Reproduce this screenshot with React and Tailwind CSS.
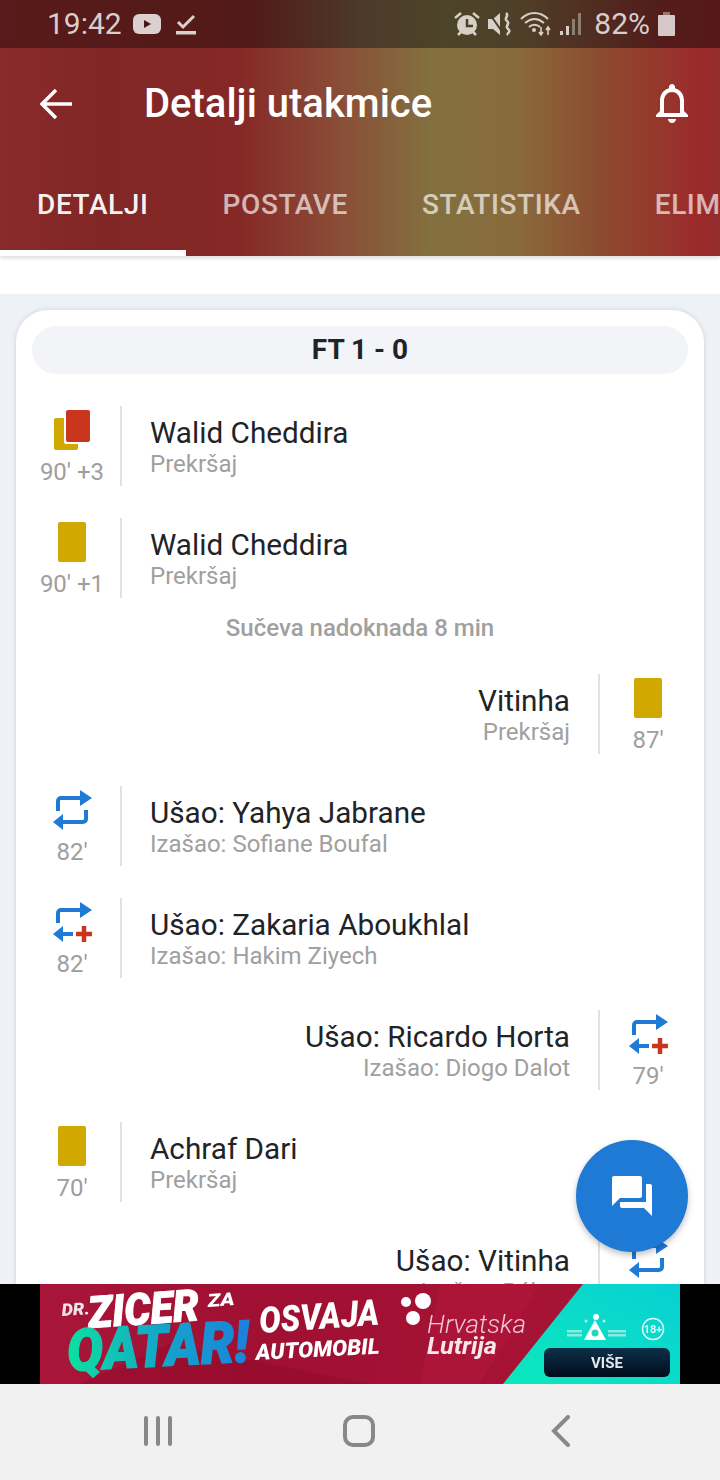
import React from "react";

const font = { fontFamily: "Roboto, 'Noto Sans', sans-serif" };

function CardIcon({ type }) {
  if (type === "yr") {
    return (
      <svg width="40" height="44" viewBox="0 0 40 44" className="block">
        <rect x="2" y="12" width="24" height="32" rx="2" fill="#d0a800" />
        <rect x="12" y="2" width="28" height="36" rx="2" fill="#ffffff" />
        <rect x="14" y="4" width="24" height="32" rx="2" fill="#c9351d" />
      </svg>
    );
  }
  return <div className="w-7 h-10 rounded-[2px] bg-[#d0a800]" />;
}

function SwapIcon({ plus }) {
  return (
    <svg width="44" height="44" viewBox="-2 -2 44 44" className="block">
      <path d="M6 23V13a3 3 0 0 1 3-3h20" fill="none" stroke="#1f7ad6" strokeWidth="4" />
      <path d="M28 2l12 8-12 8z" fill="#1f7ad6" />
      {plus ? (
        <>
          <path d="M11 34h10" stroke="#1f7ad6" strokeWidth="4" />
          <path d="M1 34l10-8v16z" fill="#1f7ad6" />
          <path d="M24 34h16M32 26v16" stroke="#c9351d" strokeWidth="4.5" />
        </>
      ) : (
        <>
          <path d="M34 22v9a3 3 0 0 1-3 3H11" fill="none" stroke="#1f7ad6" strokeWidth="4" />
          <path d="M1 34l10-8v16z" fill="#1f7ad6" />
        </>
      )}
    </svg>
  );
}

// one line of the match timeline; side is the team (left = home, right = away)
function EventRow({ side = "left", icon, time, title, sub }) {
  const right = side === "right";
  return (
    <div className={`flex h-20 px-2 ${right ? "flex-row-reverse text-right" : ""}`}>
      <div className="w-24 flex flex-col items-center">
        <div className="h-[52px] flex items-start justify-center">{icon}</div>
        <div className="text-[24px] leading-7 text-[#9e9e9e]">{time}</div>
      </div>
      <div className="w-0.5 h-20 bg-[#e2e2e2]" />
      <div className={`flex flex-col ${right ? "pr-7" : "pl-7"}`}>
        <div className="text-[29.7px] leading-8 mt-[11px] text-[#212327]">{title}</div>
        <div className="text-[24px] leading-7 mt-[1px] text-[#a0a0a0]">{sub}</div>
      </div>
    </div>
  );
}

function StatusBar() {
  return (
    <div className="h-12 flex items-center justify-between pl-[47px] pr-[45px] text-[#d9cdcd] bg-[linear-gradient(90deg,#581a1a_0%,#521a18_35%,#4c3a2a_50%,#4c4528_62%,#4f3f28_72%,#521c1a_92%,#571818_100%)]">
      <div className="flex items-center">
        <span className="text-[30px] leading-none">19:42</span>
        <svg width="28" height="20" viewBox="0 0 28 20" className="ml-[11px]">
          <rect width="28" height="20" rx="6" fill="#dccfcf" />
          <path d="M11 6l7 4-7 4z" fill="#4c1414" />
        </svg>
        <svg width="20" height="24" viewBox="0 0 20 24" className="ml-[15px]">
          <path d="M2 10l5 5 11-11" fill="none" stroke="#dccfcf" strokeWidth="3" />
          <rect x="0" y="19" width="20" height="3.5" fill="#dccfcf" />
        </svg>
      </div>
      <div className="flex items-center">
        <svg width="28" height="26" viewBox="0 0 28 26">
          <circle cx="14" cy="14" r="10" fill="#d6d0c6" />
          <path d="M14 8v7h6" fill="none" stroke="#4a4028" strokeWidth="2.5" />
          <path d="M2 7l6-5M26 7l-6-5M5 24l3-3M23 24l-3-3" stroke="#d6d0c6" strokeWidth="2.5" />
        </svg>
        <svg width="24" height="24" viewBox="0 0 24 24" className="ml-[7px]">
          <path d="M0 7h5l7-6v22l-7-6H0z" fill="#d6d0c6" />
          <path d="M1 1l14 20" stroke="#4a4028" strokeWidth="2" />
          <path d="M18 1c4 3-3 5 1 8s-3 5 1 8-2 4 0 6" fill="none" stroke="#d6d0c6" strokeWidth="2.5" />
        </svg>
        <svg width="32" height="24" viewBox="0 0 32 24" className="ml-[8px]">
          <path d="M1 7c8-8 19-8 27 0M5 11c6-5 13-5 19 0M9 15c3-3 8-3 11 0" fill="none" stroke="#d6d0c6" strokeWidth="2" />
          <circle cx="14" cy="18" r="2" fill="#d6d0c6" />
          <path d="M21 15v7M19 20l2 3 2-3M28 23v-8M26 18l2-3 2 3" fill="none" stroke="#d6d0c6" strokeWidth="1.6" />
        </svg>
        <svg width="22" height="24" viewBox="0 0 22 24" className="ml-[8px]">
          <rect x="0" y="19" width="3" height="4" fill="#d6d0c6" />
          <rect x="6" y="14" width="3" height="9" fill="#d6d0c6" />
          <rect x="12" y="7" width="3" height="16" fill="#8b8070" />
          <rect x="18" y="1" width="3" height="22" fill="#8b8070" />
        </svg>
        <span className="text-[30px] leading-none ml-3">82%</span>
        <svg width="17" height="24" viewBox="0 0 17 24" className="ml-2">
          <path d="M5 0h7v3H5z" fill="#8d7a78" />
          <rect y="3" width="17" height="21" rx="1" fill="#d6c8c8" />
        </svg>
      </div>
    </div>
  );
}

function Header() {
  const tabs = ["DETALJI", "POSTAVE", "STATISTIKA", "ELIMINACIJE"];
  return (
    <div className="h-[208px] flex flex-col shrink-0 bg-[linear-gradient(90deg,#8a2a2a_0%,#802725_14%,#852826_33%,#8a5038_48%,#83703f_60%,#8a6a3c_72%,#8c4c30_83%,#9c2a2a_97%,#942c2c_100%)] shadow-[0_2px_4px_rgba(0,0,0,0.15)] relative z-10">
      <div className="h-28 flex items-center text-white">
        <svg width="32" height="32" viewBox="0 0 32 32" className="ml-10">
          <path d="M32 16H3M16 2L2 16l14 14" fill="none" stroke="#ffffff" strokeWidth="3.5" />
        </svg>
        <span className="ml-[72px] text-[40px] font-medium leading-none">Detalji utakmice</span>
        <svg width="48" height="48" viewBox="0 0 24 24" className="ml-auto mr-6 -mt-[2px]" fill="#ffffff">
          <path d="M12 22c1.1 0 2-.9 2-2h-4c0 1.1.9 2 2 2zm6-6v-5c0-3.07-1.63-5.64-4.5-6.32V4c0-.83-.67-1.5-1.5-1.5s-1.5.67-1.5 1.5v.68C7.64 5.36 6 7.92 6 11v5l-2 2v1h16v-1l-2-2zm-2 1H8v-6c0-2.48 1.51-4.5 4-4.5s4 2.02 4 4.5v6z" />
        </svg>
      </div>
      <div className="flex h-24 overflow-hidden">
        {tabs.map((t, i) => (
          <div
            key={t}
            className={`shrink-0 h-24 px-[37px] flex items-center text-[28px] font-medium tracking-[0.6px] border-b-[6px] ${
              i === 0 ? "text-white/95 border-white" : "text-white/65 border-transparent"
            }`}
          >
            {t}
          </div>
        ))}
      </div>
    </div>
  );
}

function AdBanner() {
  const ad = "Roboto, sans-serif";
  return (
    <div className="h-[100px] shrink-0 bg-black flex justify-center relative z-20">
      <svg width="640" height="100" viewBox="0 0 640 100" className="block blur-[0.4px]">
        <defs>
          <linearGradient id="qatar" x1="0" x2="1" y1="0" y2="0">
            <stop offset="0" stopColor="#0ce0a0" />
            <stop offset="0.5" stopColor="#12a8c8" />
            <stop offset="1" stopColor="#1c80dc" />
          </linearGradient>
          <linearGradient id="teal" x1="0" x2="1" y1="1" y2="0">
            <stop offset="0" stopColor="#0ce8bc" />
            <stop offset="1" stopColor="#08d0d4" />
          </linearGradient>
          <linearGradient id="btn" x1="0" x2="0" y1="0" y2="1">
            <stop offset="0" stopColor="#0c3048" />
            <stop offset="1" stopColor="#020c1c" />
          </linearGradient>
          <linearGradient id="red" x1="0" x2="1" y1="0" y2="0">
            <stop offset="0" stopColor="#a8163a" />
            <stop offset="0.35" stopColor="#a01032" />
            <stop offset="1" stopColor="#a81436" />
          </linearGradient>
        </defs>
        <rect width="640" height="100" fill="url(#red)" />
        <path d="M40 100L130 60L330 100z" fill="#900a28" opacity="0.5" />
        <path d="M400 0h100l-60 100h-60z" fill="#b8183e" opacity="0.4" />
        <path d="M543 0H640V100H463z" fill="url(#teal)" />
        <g fontFamily={ad} fontStyle="italic" fontWeight="900" fill="#ffffff">
          <text x="22" y="32" fontSize="17" textLength="28" lengthAdjust="spacingAndGlyphs" fill="#f4e4e8" transform="rotate(-4 22 32)">DR.</text>
          <text x="49" y="44" fontSize="44" textLength="111" lengthAdjust="spacingAndGlyphs" stroke="#ffffff" strokeWidth="1" transform="rotate(-4 49 44)">ZICER</text>
          <text x="168" y="23" fontSize="18" textLength="27" lengthAdjust="spacingAndGlyphs" transform="rotate(-4 168 23)">ZA</text>
          <text x="28" y="87" fontSize="58" textLength="182" lengthAdjust="spacingAndGlyphs" fill="url(#qatar)" stroke="url(#qatar)" strokeWidth="1.5" transform="rotate(-3 28 87)">QATAR!</text>
          <text x="220" y="49" fontSize="36" textLength="120" lengthAdjust="spacingAndGlyphs" transform="rotate(-4 220 49)">OSVAJA</text>
          <text x="216" y="76" fontSize="22" textLength="124" lengthAdjust="spacingAndGlyphs" transform="rotate(-3 216 76)">AUTOMOBIL</text>
          <text x="387" y="70" fontSize="24" fontWeight="700" textLength="70" lengthAdjust="spacingAndGlyphs" fill="#f8e8ec">Lutrija</text>
        </g>
        <text x="387" y="49" fontFamily={ad} fontStyle="italic" fontWeight="300" fontSize="26" textLength="99" lengthAdjust="spacingAndGlyphs" fill="#f0c8d4">Hrvatska</text>
        <circle cx="366" cy="18" r="5" fill="#ffffff" />
        <circle cx="383" cy="17" r="8" fill="#ffffff" />
        <circle cx="373" cy="34" r="7" fill="#ffffff" />
        <path d="M555 36l11 20h-22z" fill="#ffffff" />
        <circle cx="555" cy="49" r="3.5" fill="#20d8c0" />
        <circle cx="556" cy="33" r="3" fill="#ffffff" />
        <circle cx="546" cy="37" r="1.5" fill="#ffffff" opacity="0.7" />
        <circle cx="564" cy="37" r="1.5" fill="#ffffff" opacity="0.7" />
        <rect x="527" y="46" width="15" height="2.5" fill="#ffffff" opacity="0.5" />
        <rect x="527" y="50" width="15" height="2.5" fill="#ffffff" opacity="0.5" />
        <rect x="568" y="46" width="18" height="2.5" fill="#ffffff" opacity="0.5" />
        <rect x="568" y="50" width="18" height="2.5" fill="#ffffff" opacity="0.5" />
        <circle cx="613" cy="45" r="10.5" fill="none" stroke="#ffffff" strokeWidth="1.5" opacity="0.85" />
        <text x="613" y="49" textAnchor="middle" fontFamily={ad} fontWeight="700" fontSize="11" fill="#ffffff" opacity="0.85">18+</text>
        <rect x="504" y="64" width="126" height="29" rx="6" fill="url(#btn)" />
        <text x="567" y="84" textAnchor="middle" fontFamily={ad} fontWeight="700" fontSize="15" fill="#e4e8ec">VIŠE</text>
      </svg>
    </div>
  );
}

function NavBar() {
  return (
    <div className="h-24 shrink-0 bg-[#f1f1f1] flex items-center relative z-20">
      <div className="flex gap-2 ml-[144px] -mt-[2px]">
        <div className="w-1 h-[30px] rounded-sm bg-[#888888]" />
        <div className="w-1 h-[30px] rounded-sm bg-[#888888]" />
        <div className="w-1 h-[30px] rounded-sm bg-[#888888]" />
      </div>
      <div className="w-8 h-8 ml-[171px] -mt-[2px] rounded-[10px] border-4 border-[#888888]" />
      <svg width="20" height="32" viewBox="0 0 20 32" className="ml-[176px] -mt-[2px]">
        <path d="M17 2L3 16l14 14" fill="none" stroke="#888888" strokeWidth="4" strokeLinecap="round" />
      </svg>
    </div>
  );
}

export default function App() {
  return (
    <div className="w-[720px] h-[1480px] flex flex-col overflow-hidden relative bg-[#eef1f6]" style={font}>
      <StatusBar />
      <Header />
      <div className="flex-1 min-h-0 overflow-hidden">
        <div className="h-[38px] bg-white" />
        <div className="mt-4 mx-4 pt-4 rounded-t-[32px] bg-white shadow-[0_0_5px_rgba(0,0,0,0.14)]">
          <div className="mx-4 h-12 rounded-full bg-[#f3f4f8] flex items-center justify-center text-[28px] font-bold text-[#212327]">
            FT 1 - 0
          </div>
          <div className="mt-8 flex flex-col">
            <EventRow icon={<CardIcon type="yr" />} time="90' +3" title="Walid Cheddira" sub="Prekršaj" />
            <div className="mt-8">
              <EventRow icon={<div className="pt-1"><CardIcon /></div>} time="90' +1" title="Walid Cheddira" sub="Prekršaj" />
            </div>
            <div className="h-[76px] flex items-center justify-center pb-4 text-[24px] font-medium text-[#a0a0a0]">
              Sučeva nadoknada 8 min
            </div>
            <EventRow side="right" icon={<div className="pt-1"><CardIcon /></div>} time="87'" title="Vitinha" sub="Prekršaj" />
            <div className="mt-8">
              <EventRow icon={<SwapIcon />} time="82'" title="Ušao: Yahya Jabrane" sub="Izašao: Sofiane Boufal" />
            </div>
            <div className="mt-8">
              <EventRow icon={<SwapIcon plus />} time="82'" title="Ušao: Zakaria Aboukhlal" sub="Izašao: Hakim Ziyech" />
            </div>
            <div className="mt-8">
              <EventRow side="right" icon={<SwapIcon plus />} time="79'" title="Ušao: Ricardo Horta" sub="Izašao: Diogo Dalot" />
            </div>
            <div className="mt-8">
              <EventRow icon={<div className="pt-1"><CardIcon /></div>} time="70'" title="Achraf Dari" sub="Prekršaj" />
            </div>
            <div className="mt-8">
              <EventRow side="right" icon={<SwapIcon />} time="65'" title="Ušao: Vitinha" sub="Izašao: Rúben" />
            </div>
          </div>
        </div>
      </div>
      <AdBanner />
      <NavBar />
      <button className="absolute left-[576px] top-[1140px] w-28 h-28 rounded-full bg-[#1f7ad6] flex items-center justify-center shadow-[0_3px_6px_rgba(0,0,0,0.25)] z-10">
        <svg width="48" height="48" viewBox="0 0 24 24" fill="#ffffff">
          <path d="M21 6h-2v9H6v2c0 .55.45 1 1 1h11l4 4V7c0-.55-.45-1-1-1zm-4 6V3c0-.55-.45-1-1-1H3c-.55 0-1 .45-1 1v14l4-4h10c.55 0 1-.45 1-1z" />
        </svg>
      </button>
    </div>
  );
}
